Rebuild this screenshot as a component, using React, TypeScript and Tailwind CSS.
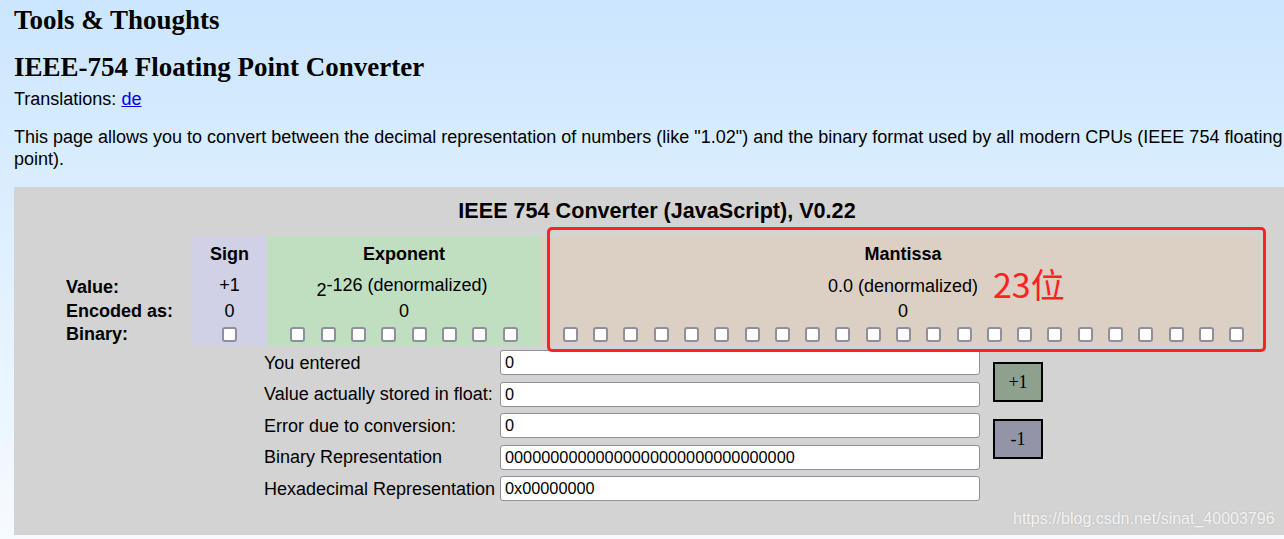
const sans = { fontFamily: '"Liberation Sans", Arial, sans-serif' };
const serif = { fontFamily: '"Liberation Serif", "Times New Roman", serif' };

function Box() {
  return (
    <span className="inline-block h-[15px] w-[15px] rounded-[3px] border-2 border-[#8f8f9d] bg-white" />
  );
}

function Boxes({ count }: { count: number }) {
  return (
    <div className="flex items-center justify-center gap-[15.3px]">
      {Array.from({ length: count }, (_, i) => (
        <Box key={i} />
      ))}
    </div>
  );
}

const fields = [
  { label: "You entered", value: "0" },
  { label: "Value actually stored in float:", value: "0" },
  { label: "Error due to conversion:", value: "0" },
  { label: "Binary Representation", value: "00000000000000000000000000000000" },
  { label: "Hexadecimal Representation", value: "0x00000000" },
];

export default function App() {
  return (
    <div
      className="h-[539px] w-full overflow-hidden bg-linear-to-b from-[#cbe6fe] to-[#f6fbff] text-[18px] text-black"
      style={sans}
    >
      <div className="w-[1310px] pl-[14px]">
        <h1 className="pt-[6px] text-[27px] font-bold leading-[28px]" style={serif}>
          Tools &amp; Thoughts
        </h1>
        <h2 className="mt-[19px] text-[27px] font-bold leading-[28px]" style={serif}>
          IEEE-754 Floating Point Converter
        </h2>
        <p className="mt-[7px] leading-[22px]">
          Translations:{" "}
          <a href="#" className="text-[#0000ee] underline">
            de
          </a>
        </p>
        <p className="mt-[16px] whitespace-nowrap leading-[22px]">
          This page allows you to convert between the decimal representation of numbers (like
          "1.02") and the binary format used by all modern CPUs (IEEE 754 floating
          <br />
          point).
        </p>

        <div className="relative mt-[17px] w-[1286px] bg-[#d3d3d3] pb-[34px] pl-[48px] pt-[11px]">
          <div className="-ml-[48px] text-center text-[21.6px] font-bold leading-[26px]">
            IEEE 754 Converter (JavaScript), V0.22
          </div>

          <div className="mt-[12px] grid grid-cols-[130px_75px_274px_720px] grid-rows-[36px_27px_24px_23px]">
            <div />
            <div className="flex items-center justify-center bg-[#d0d0e6] font-bold">Sign</div>
            <div className="flex items-center justify-center bg-[#c0dec0] font-bold">Exponent</div>
            <div className="flex items-center justify-center bg-[#dcd0c4] pl-[4px] font-bold">
              Mantissa
            </div>

            <div className="flex items-center pl-[4px] pt-[3px] font-bold">Value:</div>
            <div className="flex items-center justify-center bg-[#d0d0e6]">+1</div>
            <div className="flex items-center justify-center bg-[#c0dec0] pr-[4px]">
              <span className="pt-[9px]">2</span>
              <span>-126</span>
              <span className="ml-[5px]">(denormalized)</span>
            </div>
            <div className="flex items-center justify-center bg-[#dcd0c4] pl-[4px] pt-[2px]">
              0.0 (denormalized)
            </div>

            <div className="flex items-center pl-[4px] font-bold">Encoded as:</div>
            <div className="flex items-center justify-center bg-[#d0d0e6]">0</div>
            <div className="flex items-center justify-center bg-[#c0dec0]">0</div>
            <div className="flex items-center justify-center bg-[#dcd0c4] pl-[4px]">0</div>

            <div className="flex items-center pl-[4px] font-bold">Binary:</div>
            <div className="flex items-center justify-center bg-[#d0d0e6]">
              <Boxes count={1} />
            </div>
            <div className="flex items-center justify-center bg-[#c0dec0]">
              <Boxes count={8} />
            </div>
            <div className="flex items-center justify-center bg-[#dcd0c4] pl-[5px]">
              <Boxes count={23} />
            </div>
          </div>

          <div className="ml-[202px] mt-[4px] flex">
            <div className="flex flex-col gap-[6.5px]">
              {fields.map((f) => (
                <div key={f.label} className="flex items-center">
                  <span className="w-[236px] whitespace-nowrap leading-[22px]">{f.label}</span>
                  <input
                    readOnly
                    value={f.value}
                    className="h-[25px] w-[480px] rounded-[3px] border border-[#8f8f9d] bg-white px-[4px] text-[16.3px] outline-none"
                    style={sans}
                  />
                </div>
              ))}
            </div>
            <div className="ml-[13px] mt-[12px] flex flex-col gap-[17px]" style={serif}>
              <button className="h-[40px] w-[50px] border-2 border-black bg-[#8ea08e] text-[18px]">
                +1
              </button>
              <button className="h-[40px] w-[50px] border-2 border-black bg-[#9494a8] text-[18px]">
                -1
              </button>
            </div>
          </div>

          {/* annotation overlay */}
          <div className="pointer-events-none absolute left-[533px] top-[40px] h-[125px] w-[719px] rounded-[5px] border-[3px] border-[#ff2020]" />
          <div
            className="pointer-events-none absolute left-[979px] top-[77px] text-[34px] leading-[40px] text-[#ff2020]"
            style={{ fontFamily: '"Noto Sans CJK SC", "Noto Sans", sans-serif' }}
          >
            23位
          </div>
          <div className="pointer-events-none absolute left-[999px] top-[321px] text-[16px] leading-[22px] text-white/80 [text-shadow:0_0_2px_rgba(0,0,0,0.15)]">
            https://blog.csdn.net/sinat_40003796
          </div>
        </div>
      </div>
    </div>
  );
}
